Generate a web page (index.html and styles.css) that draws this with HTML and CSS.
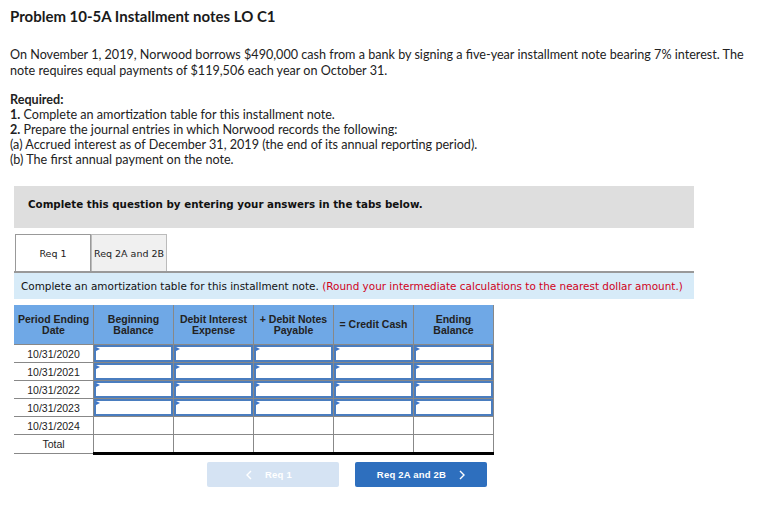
FILE: index.html
```html
<!DOCTYPE html>
<html>
<head>
<meta charset="utf-8">
<link rel="stylesheet" href="styles.css">
</head>
<body>
<div class="page">
  <h1 class="title">Problem 10-5A Installment notes LO C1</h1>
  <p class="intro">On November 1, 2019, Norwood borrows $490,000 cash from a bank by signing a five-year installment note bearing 7% interest. The note requires equal payments of $119,506 each year on October 31.</p>
  <div class="req">
    <div class="req-head">Required:</div>
    <div><b>1.</b> Complete an amortization table for this installment note.</div>
    <div><b>2.</b> Prepare the journal entries in which Norwood records the following:</div>
    <div>(a) Accrued interest as of December 31, 2019 (the end of its annual reporting period).</div>
    <div>(b) The first annual payment on the note.</div>
  </div>

  <div class="qa">
    <div class="banner">Complete this question by entering your answers in the tabs below.</div>
    <div class="tabs">
      <div class="tab active">Req 1</div>
      <div class="tab">Req 2A and 2B</div>
    </div>
    <div class="instr">Complete an amortization table for this installment note. <span class="red">(Round your intermediate calculations to the nearest dollar amount.)</span></div>

    <table class="amort">
      <thead>
        <tr>
          <th>Period Ending<br>Date</th>
          <th>Beginning<br>Balance</th>
          <th>Debit Interest<br>Expense</th>
          <th>+ Debit Notes<br>Payable</th>
          <th>= Credit Cash</th>
          <th>Ending<br>Balance</th>
        </tr>
      </thead>
      <tbody>
        <tr><td class="date">10/31/2020</td><td class="in"><div class="box"></div></td><td class="in"><div class="box"></div></td><td class="in"><div class="box"></div></td><td class="in"><div class="box"></div></td><td class="in"><div class="box"></div></td></tr>
        <tr><td class="date">10/31/2021</td><td class="in"><div class="box"></div></td><td class="in"><div class="box"></div></td><td class="in"><div class="box"></div></td><td class="in"><div class="box"></div></td><td class="in"><div class="box"></div></td></tr>
        <tr><td class="date">10/31/2022</td><td class="in"><div class="box"></div></td><td class="in"><div class="box"></div></td><td class="in"><div class="box"></div></td><td class="in"><div class="box"></div></td><td class="in"><div class="box"></div></td></tr>
        <tr><td class="date">10/31/2023</td><td class="in"><div class="box"></div></td><td class="in"><div class="box"></div></td><td class="in"><div class="box"></div></td><td class="in"><div class="box"></div></td><td class="in"><div class="box"></div></td></tr>
        <tr class="last"><td class="date">10/31/2024</td><td></td><td></td><td></td><td></td><td></td></tr>
        <tr class="total"><td class="date">Total</td><td></td><td></td><td></td><td></td><td></td></tr>
      </tbody>
    </table>

    <div class="nav">
      <div class="btn prev"><svg class="chev" width="6" height="10" viewBox="0 0 6 10"><polyline points="5,1 1,5 5,9" fill="none" stroke="#fff" stroke-width="1.4"/></svg><span class="lbl-prev">Req 1</span></div>
      <div class="btn next"><span class="lbl-next">Req 2A and 2B</span><svg class="chev" width="6" height="10" viewBox="0 0 6 10"><polyline points="1,1 5,5 1,9" fill="none" stroke="#fff" stroke-width="1.4"/></svg></div>
    </div>
  </div>
</div>
</body>
</html>
```
FILE: styles.css
```css
html, body { margin: 0; padding: 0; background: #fff; }
body { font-family: Lato, "Open Sans", sans-serif; color: #222; }
.page { padding: 0 10px; }
.title { font-size: 15px; font-weight: bold; margin: 0; padding-top: 7px; line-height: 18px; color: #1a1a1a; }
.intro { font-size: 12.6px; line-height: 16px; margin: 22px 0 0; }
.req { font-size: 12.6px; line-height: 15px; margin-top: 13px; }
.req-head { font-weight: bold; }
.qa { margin-left: 4px; width: 680px; margin-top: 19px; font-family: "DejaVu Sans", Verdana, sans-serif; }
.banner { background: #dedede; height: 42px; box-sizing: border-box; padding: 11px 14px; font-size: 10.3px; font-weight: bold; color: #111; line-height: 14px; }
.tabs { display: flex; margin-top: 6px; border-bottom: 2px solid #999; height: 37px; }
.tab { font-size: 9.5px; border: 1px solid #bbb; border-bottom: none; width: 74px; display: flex; align-items: center; justify-content: center; background: #f0f0f0; color: #222; }
.tab.active { background: #fff; border-color: #999; margin-left: 1px; }
.instr { background: #d7ebf8; height: 26px; box-sizing: border-box; padding: 6px 7px; font-size: 10.45px; line-height: 14px; color: #111; }
.red { color: #d0021b; }
.amort { border-collapse: collapse; margin-top: 6px; font-family: "Liberation Sans", Arial, sans-serif; table-layout: fixed; }
.amort th { background: #6fa8e6; width: 79px; height: 39px; padding: 0; font-size: 10.5px; line-height: 11px; color: #222; font-weight: bold; border-left: 1px solid #888; border-right: 1px solid #888; }
.amort th:first-child { border-left: none; }
.amort td { height: 17px; padding: 0; border: 1px solid #888; font-size: 10.5px; text-align: center; color: #222; }
.amort td.date { border-left: none; }
.amort td.in { padding: 0; }
.box { height: 13px; border: 2px solid #4a7dbf; position: relative; }
.box::before { content: ""; position: absolute; left: 0; top: 0; border-left: 4px solid #3d75c7; border-top: 2px solid transparent; border-bottom: 2px solid transparent; }
.amort tr.total td { border-top: 1px solid #000; }
.amort tr.total td:not(.date) { border-bottom: 3px solid #000; }
.amort tr.total td.date { border-top: 1px solid #888; }
.nav { display: flex; gap: 16px; margin: 7px 0 0 193px; }
.btn { width: 132px; height: 25px; border-radius: 2px; font-family: "Liberation Sans", Arial, sans-serif; font-size: 9.5px; letter-spacing: 0.2px; font-weight: bold; color: #fff; display: flex; align-items: center; justify-content: center; gap: 13px; }
.prev { background: #d5e3f3; }
.next { background: #2e6fbe; }
.lbl-prev { margin-right: 8px; }
```
